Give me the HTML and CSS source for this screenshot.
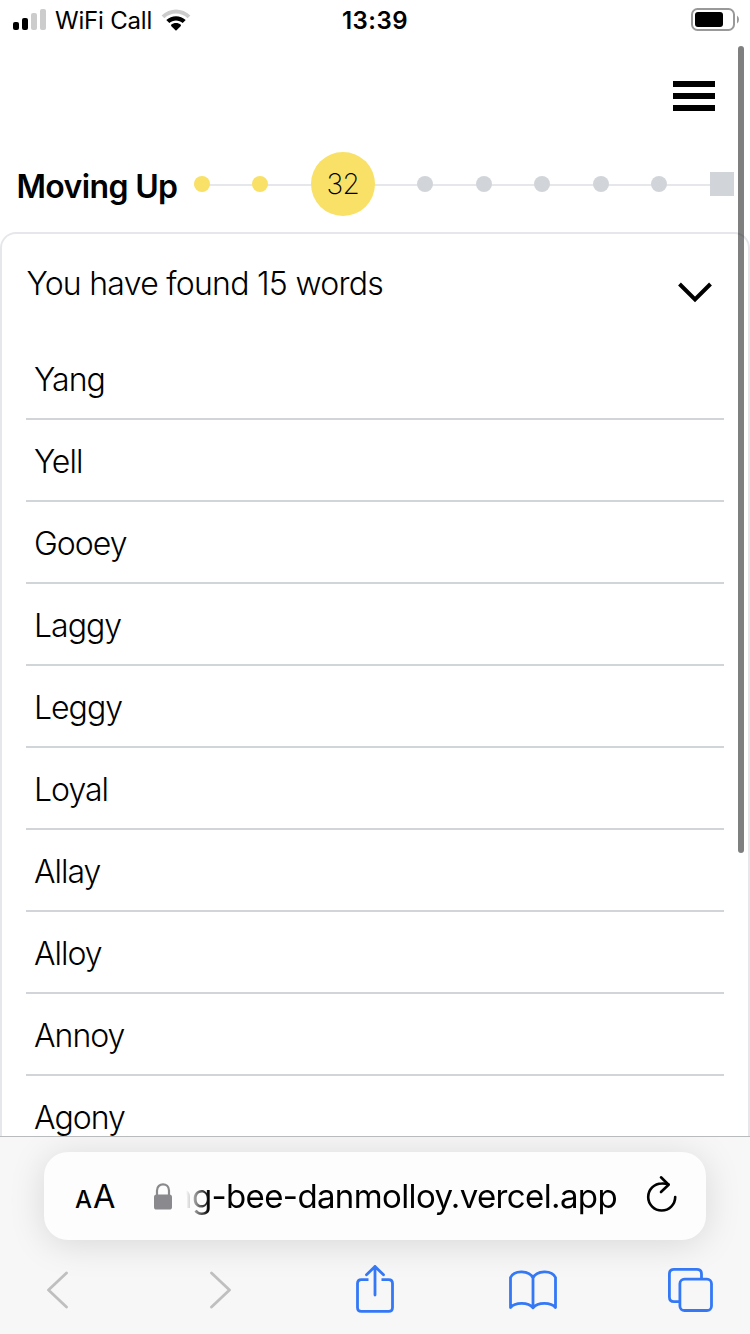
FILE: index.html
```html
<!DOCTYPE html>
<html lang="en">
<head>
<meta charset="utf-8">
<title>Spelling Bee</title>
<link rel="stylesheet" href="styles.css">
</head>
<body>
<div class="screen">
  <header class="status">
    <div class="status-left">
      <svg class="signal" width="33" height="21" viewBox="0 0 33 21">
        <rect x="0" y="13" width="6" height="8" rx="2"/>
        <rect x="9" y="9" width="6" height="12" rx="2"/>
        <rect class="dim" x="18" y="4" width="6" height="17" rx="2"/>
        <rect class="dim" x="27" y="0" width="6" height="21" rx="2"/>
      </svg>
      <span class="carrier">WiFi Call</span>
      <svg class="wifi" width="30" height="22" viewBox="0 0 30 22">
        <path class="dim" d="M.6 6.4C8.6-1.6 21.4-1.6 29.4 6.4L26.6 9.2C20.2 3 9.8 3 3.4 9.2Z"/>
        <path d="M5.3 11.1C10.7 5.9 19.3 5.9 24.7 11.1L21.7 14C18 10.5 12 10.5 8.3 14Z"/>
        <path d="M10.1 15.8C12.8 13.4 17.2 13.4 19.9 15.8L19.9 17L15 21.8L10.1 17Z"/>
      </svg>
    </div>
    <span class="clock">13:39</span>
    <svg class="battery" width="48" height="23" viewBox="0 0 48 23">
      <rect x="1" y="1" width="42" height="21" rx="5.5" fill="none" stroke="#999" stroke-width="2"/>
      <rect x="4" y="4" width="28" height="15" rx="3"/>
      <path d="M46 7.5Q48 9 48 11.5T46 15.5Z" fill="#999"/>
    </svg>
  </header>

  <nav class="topbar">
    <div class="menu"><i></i><i></i><i></i></div>
  </nav>

  <section class="progress">
    <h1 class="rank">Moving Up</h1>
    <div class="track">
      <span class="dot done"></span>
      <span class="dot done"></span>
      <span class="score">32</span>
      <span class="dot"></span>
      <span class="dot"></span>
      <span class="dot"></span>
      <span class="dot"></span>
      <span class="dot"></span>
      <span class="goal"></span>
    </div>
  </section>

  <main class="card">
    <div class="summary">
      <span class="found">You have found 15 words</span>
      <svg class="chevron" width="34" height="21" viewBox="0 0 34 21"><path d="M1.5 2L17 17.4L32.5 2" fill="none" stroke="#000" stroke-width="4"/></svg>
    </div>
    <ul class="words">
      <li>Yang</li>
      <li>Yell</li>
      <li>Gooey</li>
      <li>Laggy</li>
      <li>Leggy</li>
      <li>Loyal</li>
      <li>Allay</li>
      <li>Alloy</li>
      <li>Annoy</li>
      <li>Agony</li>
    </ul>
  </main>

  <footer class="browser">
    <div class="address">
      <span class="reader"><small>A</small>A</span>
      <svg class="lock" width="20" height="27" viewBox="0 0 20 27">
        <path d="M4 13V7.5C4 -.8 16 -.8 16 7.5V13" fill="none" stroke="#8a8a8e" stroke-width="2.2"/>
        <rect x="1" y="11.5" width="18" height="15" rx="2.6" fill="#8a8a8e"/>
      </svg>
      <span class="url"><span>ng-bee-danmolloy.vercel.app</span></span>
      <svg class="reload" width="32" height="38" viewBox="0 0 32 38" fill="none" stroke="#000" stroke-width="2.6" stroke-linecap="round" stroke-linejoin="round">
        <path d="M29.2 22A13.5 13.5 0 1 1 15.7 8.5Q19.5 8.3 22.6 9.4"/>
        <path d="M15 2.3L22.6 9.7L15 17"/>
      </svg>
    </div>
    <div class="tools">
      <svg width="22" height="38" viewBox="0 0 22 38" fill="none" stroke="#bfbfbf" stroke-width="2.8" stroke-linecap="round" stroke-linejoin="round"><path d="M20.5 2L2.5 19L20.5 36"/></svg>
      <svg width="22" height="38" viewBox="0 0 22 38" fill="none" stroke="#bfbfbf" stroke-width="2.8" stroke-linecap="round" stroke-linejoin="round"><path d="M2.5 2L20.5 19L2.5 36"/></svg>
      <svg width="38" height="50" viewBox="0 0 38 50" fill="none" stroke="#3478f6" stroke-width="2.8" stroke-linecap="round" stroke-linejoin="round">
        <path d="M12.5 14.6H5.4Q1.5 14.6 1.5 18.5V42.5Q1.5 46.4 5.4 46.4H32.6Q36.5 46.4 36.5 42.5V18.5Q36.5 14.6 32.6 14.6H25.5" stroke-linecap="butt"/>
        <path d="M19 30V1.5M10.5 9.8L19 1.5L27.5 9.8"/>
      </svg>
      <svg width="48" height="40" viewBox="0 0 48 40" fill="none" stroke="#3478f6" stroke-width="2.8" stroke-linecap="round" stroke-linejoin="round">
        <path d="M24 8C20.5 .2 5.2-.5 1.5 7.5V37.5C6 32.2 19.2 31.8 24 37.8C28.8 31.8 42 32.2 46.5 37.5V7.5C42.8-.5 27.5 .2 24 8V37.8"/>
      </svg>
      <svg width="46" height="44" viewBox="0 0 46 44" fill="none" stroke="#3478f6" stroke-width="2.8">
        <path d="M33.5 11V6Q33.5 1.4 28.9 1.4H6Q1.4 1.4 1.4 6V29Q1.4 33.6 6 33.6H12"/>
        <rect x="11.9" y="11.2" width="31.6" height="31.3" rx="4.6"/>
      </svg>
    </div>
  </footer>
  <div class="scrollbar"></div>
</div>
</body>
</html>
```
FILE: styles.css
```css
* { box-sizing: border-box; }
body { margin: 0; background: #fff; color: #000; font-family: Inter, "Liberation Sans", sans-serif; }
svg { display: block; flex: none; }
.screen { position: relative; width: 750px; height: 1334px; overflow: hidden; display: flex; flex-direction: column; }

.status { flex: none; height: 40px; padding: 0 11px 0 13px; display: grid; grid-template-columns: 1fr auto 1fr; align-items: center; }
.status-left { display: flex; align-items: center; }
.signal { margin-top: -1px; }
.battery { margin-top: -1px; justify-self: end; }
.status .dim { fill: #ccc; }
.carrier { margin-left: 9px; width: 106px; padding-top: 2px; font-size: 24px; line-height: 38px; letter-spacing: -.2px; white-space: nowrap; }
.clock { padding: 2px 2px 0 0; font-size: 24px; line-height: 38px; font-weight: 600; letter-spacing: .5px; }

.topbar { flex: none; height: 112px; padding: 41px 35px 0; display: flex; justify-content: flex-end; }
.menu { width: 42px; display: flex; flex-direction: column; gap: 6px; }
.menu i { height: 6px; background: #000; }

.progress { flex: none; height: 64px; padding: 0 16.1px 0 16.5px; display: flex; justify-content: space-between; align-items: center; }
.rank { margin: 5px 0 0; font-size: 32px; font-weight: 600; line-height: 40px; letter-spacing: -.65px; white-space: nowrap; }
.track { width: 540px; height: 64px; flex: none; display: flex; align-items: center; justify-content: space-between; background: linear-gradient(#e5e7eb, #e5e7eb) 0 32px / 100% 2px no-repeat; }
.dot { width: 16px; height: 16px; border-radius: 50%; background: #d1d5d9; }
.done { background: #f8e166; }
.score { width: 64px; height: 64px; border-radius: 50%; background: #f8e166; font-size: 28px; font-weight: 200; line-height: 65px; letter-spacing: -.5px; text-align: center; }
.goal { width: 24px; height: 24px; background: #d1d5d9; }

.card { flex: none; height: 904px; margin-top: 16px; padding: 0 24px; border: 2px solid #e5e7eb; border-bottom: 0; border-radius: 16px 16px 0 0; overflow: hidden; font-size: 32px; font-weight: 300; }
.summary { height: 104px; display: flex; justify-content: space-between; align-items: flex-start; padding: 26px 12px 0 .5px; }
.found { line-height: 48px; letter-spacing: -.73px; white-space: nowrap; }
.chevron { margin-top: 22px; }
.words { list-style: none; margin: 0; padding: 0; }
.words li { height: 82px; padding: 18px 8px 0; line-height: 48px; letter-spacing: -1px; border-bottom: 2px solid #d1d5d9; }

.browser { flex: none; height: 198px; padding: 15px 44px 0; border-top: 1px solid #b9bcbc; background: #f7f7f7; overflow: hidden; }
.address { height: 88px; padding: 0 28px 0 31px; display: flex; align-items: center; border-radius: 24px; background: #fdfdfd; box-shadow: 0 4px 36px rgba(0, 0, 0, .13); }
.reader { width: 78px; padding-top: 4px; font-size: 32.5px; white-space: nowrap; line-height: 86px; }
.reader small { margin-right: 1px; font-size: 24px; font-weight: 500; }
.url { width: 431px; margin-left: 13px; margin-right: 1px; display: flex; justify-content: flex-end; overflow: hidden; font-size: 33px; line-height: 88px; letter-spacing: -.63px; white-space: nowrap; -webkit-mask-image: linear-gradient(90deg, transparent, #000 23px); mask-image: linear-gradient(90deg, transparent, #000 23px); }
.reload { margin-left: 28px; margin-top: -5px; }
.tools { height: 100px; margin-left: 2px; display: grid; grid-template-columns: 163px 147px 152.5px 159.5px 46px; align-items: center; }

.scrollbar { position: absolute; left: 738px; top: 46px; width: 6px; height: 807px; border-radius: 3px; background: rgba(0, 0, 0, .5); }
```
